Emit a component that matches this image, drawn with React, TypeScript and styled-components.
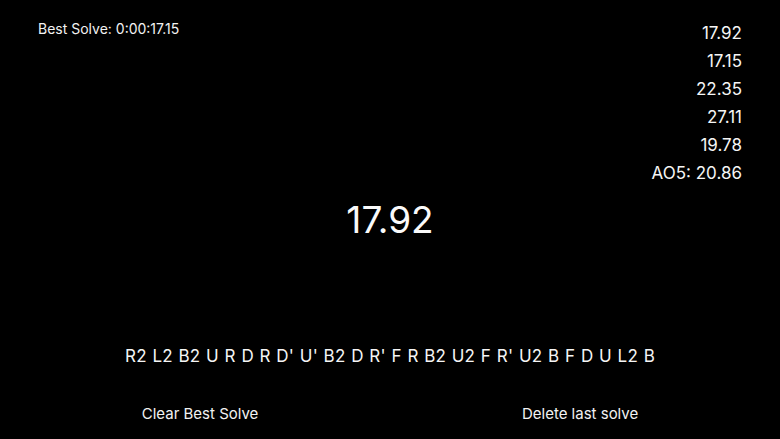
import React from "react";
import styled, { createGlobalStyle } from "styled-components";

const GlobalStyle = createGlobalStyle`
	html, body {
		margin: 0;
		padding: 0;
		background: #000;
	}
	body {
		font-family: Inter, "Noto Sans", "Liberation Sans", sans-serif;
		color: #fff;
	}
`;

const times = ["17.92", "17.15", "22.35", "27.11", "19.78"];
const average = "20.86";
const scramble = "R2 L2 B2 U R D R D' U' B2 D R' F R B2 U2 F R' U2 B F D U L2 B";

const App = () => {
	return (
		<Screen>
			<GlobalStyle />
			<Header>
				<BestSolve>Best Solve: 0:00:17.15</BestSolve>
				<TimesList>
					{times.map((time, i) => (
						<TimeItem key={i}>{time}</TimeItem>
					))}
					<TimeItem>AO5: {average}</TimeItem>
				</TimesList>
			</Header>
			<Timer>17.92</Timer>
			<Scramble>{scramble}</Scramble>
			<ButtonRow>
				<TextButton>Clear Best Solve</TextButton>
				<TextButton>Delete last solve</TextButton>
			</ButtonRow>
		</Screen>
	);
};

const Screen = styled.div`
	width: 100vw;
	height: 100vh;
	overflow: hidden;
	display: flex;
	flex-direction: column;
	background: #000;
`;

const Header = styled.div`
	display: flex;
	justify-content: space-between;
	align-items: flex-start;
	padding: 0 38px;
`;

const BestSolve = styled.div`
	margin-top: 20px;
	font-size: 14px;
	line-height: 18px;
	color: #f2f2f2;
`;

const TimesList = styled.div`
	display: flex;
	flex-direction: column;
	align-items: flex-end;
	padding-top: 19px;
`;

const TimeItem = styled.div`
	font-size: 17px;
	line-height: 28px;
	color: #f5f5f5;
`;

const Timer = styled.div`
	margin-top: 11px;
	text-align: center;
	font-size: 37px;
	line-height: 44px;
	color: #fafafa;
`;

const Scramble = styled.div`
	margin-top: 102px;
	text-align: center;
	font-size: 17px;
	line-height: 24px;
	letter-spacing: 0.2px;
	word-spacing: 0.7px;
	color: #f5f5f5;
`;

const ButtonRow = styled.div`
	margin-top: 36px;
	display: flex;
	justify-content: space-around;
	padding: 0 10px;
`;

const TextButton = styled.button`
	background: none;
	border: none;
	padding: 0;
	color: #f2f2f2;
	font-family: inherit;
	font-size: 15px;
	line-height: 20px;
	cursor: pointer;
`;

export default App;
